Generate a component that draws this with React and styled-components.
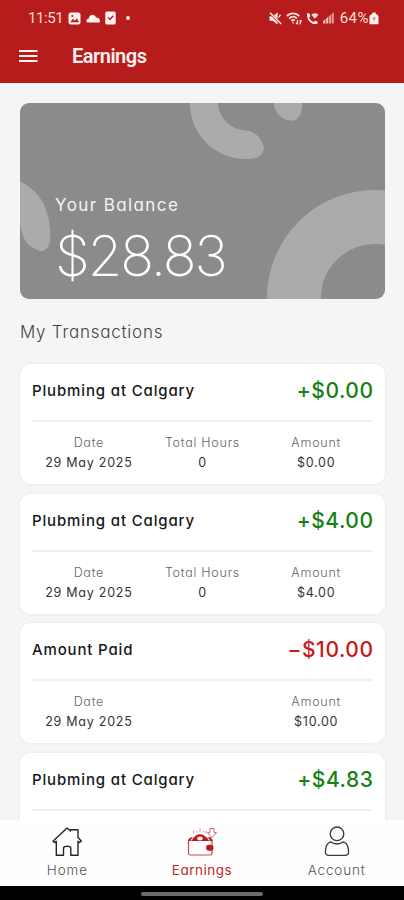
import React from "react";
import styled, { createGlobalStyle } from "styled-components";

const GlobalStyle = createGlobalStyle`
    * {
        box-sizing: border-box;
    }
    body {
        margin: 0;
        background-color: #f5f5f5;
        font-family: Inter, "Open Sans", sans-serif;
        font-feature-settings: "cv11";
    }
`;

export const Screen = styled.div`
    width: 404px;
    height: 900px;
    display: flex;
    flex-direction: column;
    overflow: hidden;
`;


//================================ Header =================================

export const Header = styled.header`
    height: 83px;
    flex-shrink: 0;
    background-color: #b71c1c;
    color: #fff1ee;
    font-family: Roboto, sans-serif;
`;

export const StatusBar = styled.div`
    height: 36px;
    padding: 0 25px 0 28px;
    display: flex;
    align-items: center;
    justify-content: space-between;
    font-size: 15px;
    color: #fbdcd8;
`;

export const StatusGroup = styled.div`
    display: flex;
    align-items: center;
    gap: ${({ $gap }) => $gap}px;
`;

export const StatusText = styled.span`
    letter-spacing: ${({ $spacing }) => $spacing}px;
`;

export const DotWrapper = styled.div`
    display: flex;
    margin-left: 5px;
`;

export const TitleBar = styled.div`
    height: 40px;
    padding-left: 19px;
    display: flex;
    align-items: center;
    gap: 34px;
`;

export const Title = styled.h1`
    margin: 0;
    font-size: 20px;
    font-weight: 600;
    line-height: 24px;
    letter-spacing: -0.5px;
`;


//================================ Balance =================================

export const Content = styled.main`
    flex: 1;
    min-height: 0;
    padding: 20px 19px 0 20px;
    overflow: hidden;
`;

export const BalanceCard = styled.section`
    position: relative;
    height: 196px;
    padding: 91px 35px 0;
    border-radius: 9px;
    background-color: #8b8b8b;
    color: white;
    overflow: hidden;
`;

export const BalancePattern = styled.svg`
    position: absolute;
    top: 0;
    left: 0;
`;

export const BalanceLabel = styled.div`
    position: relative;
    font-size: 17px;
    line-height: 23px;
    letter-spacing: 1.4px;
    color: #f4f4f4;
`;

export const BalanceValue = styled.div`
    position: relative;
    margin-top: 10px;
    font-size: 56px;
    font-weight: 250;
    line-height: 58px;
    letter-spacing: -2.1px;
`;


//================================ Transactions =================================

export const SectionTitle = styled.h2`
    margin: 20px 0 19px;
    font-size: 17px;
    font-weight: 300;
    line-height: 26px;
    letter-spacing: 0.75px;
    color: #444;
`;

export const TransactionList = styled.div`
    display: flex;
    flex-direction: column;
    gap: 9.7px;
`;

export const TransactionCard = styled.article`
    height: 120px;
    flex-shrink: 0;
    padding: 0 12px;
    border-radius: 11px;
    background-color: white;
    box-shadow: 0 0 2px 1px #ececec;
`;

export const TransactionHeader = styled.div`
    height: 58px;
    padding-bottom: 3px;
    display: flex;
    align-items: center;
    justify-content: space-between;
    border-bottom: 2px solid #f0f0f0;
`;

export const TransactionName = styled.div`
    font-size: 15px;
    font-weight: 550;
    letter-spacing: 0.85px;
    color: #181818;
`;

export const TransactionTotal = styled.div`
    margin-right: -0.5px;
    font-size: 21px;
    font-weight: 500;
    letter-spacing: 0.55px;
    color: ${({ $negative }) => ($negative ? "#c91818" : "#168016")};
`;

export const Details = styled.div`
    padding-top: 11px;
    display: grid;
    grid-template-columns: 1fr 1fr 1fr;
`;

export const Detail = styled.div`
    text-align: center;
    line-height: 20px;
`;

export const DetailLabel = styled.div`
    font-size: 12.5px;
    font-weight: 300;
    letter-spacing: 0.75px;
    color: #666;
`;

export const DetailValue = styled.div`
    font-size: 12.5px;
    letter-spacing: 0.75px;
    color: #333;
`;


//================================ BottomMenu =================================

export const BottomMenu = styled.nav`
    height: 66px;
    flex-shrink: 0;
    display: grid;
    grid-template-columns: 1fr 1fr 1fr;
    background-color: #fefefe;
`;

export const MenuItem = styled.div`
    padding-top: 5px;
    display: flex;
    flex-direction: column;
    align-items: center;
    gap: 4px;
    font-size: 13.5px;
    line-height: 18px;
    font-weight: ${({ $active }) => ($active ? 400 : 300)};
    letter-spacing: ${({ $active }) => ($active ? 0.5 : 0.85)}px;
    color: ${({ $active }) => ($active ? "#b92c2c" : "#555")};
`;

export const GestureBar = styled.div`
    height: 14px;
    flex-shrink: 0;
    display: flex;
    justify-content: center;
    align-items: center;
    padding-top: 1px;
    background-color: black;
`;

export const GestureHandle = styled.div`
    width: 122px;
    height: 4px;
    border-radius: 2px;
    background-color: #6c6c6c;
`;


//================================ Icons =================================

const PictureIcon = () => (
  <svg width="13" height="13" viewBox="0 0 13 13">
    <rect x="0.5" y="0.5" width="12" height="12" rx="2.5" fill="#fff1ee" />
    <path d="M2.2 10.2 L5 6.8 L7 8.8 L9 6.2 L11 10.2Z" fill="#b71c1c" />
    <circle cx="4.3" cy="4" r="1.1" fill="#b71c1c" />
  </svg>
);

const CloudIcon = () => (
  <svg width="14" height="9" viewBox="0 0 14 9">
    <path d="M2.3 8.6C-.3 8.3-.3 5 2.6 4.8C3.3.2 8.4-.7 10 3.4C13 3.2 14.4 5 13.8 8.6Z" fill="#fff1ee" />
  </svg>
);

const TaskIcon = () => (
  <svg width="11" height="14" viewBox="0 0 11 14">
    <rect x="0.3" y="0.5" width="10.4" height="13" rx="1.6" fill="#fff1ee" />
    <path d="M3 6.4L5 8.5L8.3 4.7" fill="none" stroke="#b71c1c" strokeWidth="1.3" />
  </svg>
);

const DotIcon = () => (
  <svg width="4" height="4" viewBox="0 0 4 4">
    <circle cx="2" cy="2" r="1.9" fill="#fff1ee" />
  </svg>
);

const MuteIcon = () => (
  <svg width="13" height="13" viewBox="0 0 13 13">
    <path d="M.5 4.3H3.6L8.6.6V12.4L3.6 8.8H.5Z" fill="#fff1ee" />
    <path d="M0 0L12.5 12.5" stroke="#b71c1c" strokeWidth="2.6" />
    <path d="M1 .8L12.2 12" stroke="#fff1ee" strokeWidth="1.5" />
    <path d="M9.8 5.5L11.4 2.6" stroke="#fff1ee" strokeWidth="1.2" />
  </svg>
);

const WifiIcon = () => (
  <svg width="16" height="13" viewBox="0 0 16 13" fill="none" stroke="#fbdcd8">
    <path d="M.8 4.2C4 .4 10 .4 13.2 4.2M3.1 6.6C5.5 4 8.7 4 10.9 6.5M5.2 8.7C6.4 7.5 7.8 7.5 8.8 8.7" strokeWidth="1.8" />
    <path d="M7 11.5V9.5M11.5 8V12.2M10 10.8L11.5 12.4M14.3 12.4V8M14.3 8L15.6 9.5" strokeWidth="1.3" />
  </svg>
);

const CallIcon = () => (
  <svg width="13" height="13" viewBox="0 0 13 13">
    <path d="M1.2 1.2L3.8 1.8L4.2 4.4L3 5.6C4 8 5.4 9.2 7.6 9.9L9 8.7L11.6 9.4L11.4 11.8C5.7 13.3.1 8.1 1.2 1.2Z" fill="#fff1ee" />
    <path d="M5.3 2.8C7.5.7 10.3.7 12.5 2.8L8.9 6.7Z" fill="#fbdcd8" />
  </svg>
);

const SignalIcon = () => (
  <svg width="11" height="12" viewBox="0 0 11 12">
    <path d="M0 11.5V9L2.3 7.2V11.5ZM2.9 11.5V6.7L5.2 4.8V11.5Z" fill="#f3b8b3" />
    <path d="M5.8 11.5V4.2L8 2.4V11.5ZM8.6 11.5V2L10.8.2V11.5Z" fill="#e39a96" />
  </svg>
);

const BatteryIcon = () => (
  <svg width="10" height="13" viewBox="0 0 10 13">
    <path d="M3.3 2V.6H6.7V2C8.6 2.3 9.5 3.5 9.5 5V12.3H.5V5C.5 3.5 1.4 2.3 3.3 2Z" fill="#fff1ee" />
    <path d="M5.8 3.5L3.4 7H4.8L4.2 9.8L6.9 6.2H5.4Z" fill="#b98480" />
  </svg>
);

const MenuIcon = () => (
  <svg width="19" height="14" viewBox="0 0 19 14" stroke="#fff1ee" strokeWidth="2">
    <path d="M0 2H18.5M0 7H18.5M0 12H18.5" />
  </svg>
);

const HomeIcon = () => (
  <svg width="32" height="32" viewBox="0 0 32 32" fill="none" stroke="#252525" strokeWidth="1.4" strokeLinejoin="round">
    <path d="M2 16.2L16 3L19.5 6.1V4.8H27V12.5L30.3 16L28.5 17.5L27 16.2V30.3H19.8V23C19.8 20.6 12.5 20.6 12.5 23V30.3H5.3V16.2L3.8 17.6Z" />
  </svg>
);

const WalletIcon = () => (
  <svg width="32" height="32" viewBox="0 0 32 32" fill="none">
    <path d="M2.5 15V28.5C2.5 29.5 3 30 4 30H24.2C25.3 30 26 29.4 26 28.5V15" stroke="#bd4c4c" strokeWidth="1.2" />
    <path d="M2 16C2.5 13 4.5 12 7 12H22C24.8 12 26.5 13.2 26.5 16Z" fill="#b71c1c" />
    <path d="M6.5 16C8 7 20 7 21.5 16" fill="#b71c1c" />
    <path d="M5 15.5L7.5 11.8M21 11.8L23.5 15.5" stroke="#f7dcdc" strokeWidth="1.2" />
    <ellipse cx="14" cy="13.5" rx="2.8" ry="1.9" fill="#ffe7e7" />
    <rect x="20.2" y="19.8" width="7.2" height="6" rx="2.4" fill="#b71c1c" />
    <path d="M7.5 8.5V5.5M10.7 7.5V6M14 6.5V3.5M17.3 7.5V6M20 8.5V6" stroke="#d98b8b" strokeWidth="1" />
    <path d="M23.8 3.5H28V7.7H30.5L26 12.6L21.5 7.7H23.8Z" stroke="#c96c6c" strokeWidth="1" />
  </svg>
);

const AccountIcon = () => (
  <svg width="32" height="32" viewBox="0 0 32 32" fill="none" stroke="#3a3a3a" strokeWidth="1.3" strokeLinejoin="round">
    <circle cx="16" cy="8.8" r="6.8" />
    <path d="M9.5 16.8C6 18 4.4 21.5 4.4 27C4.4 29.2 5.7 30.4 8 30.4H24C26.3 30.4 27.6 29.2 27.6 27C27.6 21.5 26 18 22.5 16.8C18.5 19.5 13.5 19.5 9.5 16.8Z" />
  </svg>
);


//================================ App =================================

const transactions = [
  { name: "Plubming at Calgary", total: "+$0.00", date: "29 May 2025", hours: "0", amount: "$0.00" },
  { name: "Plubming at Calgary", total: "+$4.00", date: "29 May 2025", hours: "0", amount: "$4.00" },
  { name: "Amount Paid", total: "−$10.00", date: "29 May 2025", amount: "$10.00", negative: true },
  { name: "Plubming at Calgary", total: "+$4.83" },
];

const DetailItem = ({ label, value }) => (
  <Detail>
    {value && (
      <>
        <DetailLabel>{label}</DetailLabel>
        <DetailValue>{value}</DetailValue>
      </>
    )}
  </Detail>
);

const Transaction = ({ item }) => (
  <TransactionCard>
    <TransactionHeader>
      <TransactionName>{item.name}</TransactionName>
      <TransactionTotal $negative={item.negative}>{item.total}</TransactionTotal>
    </TransactionHeader>
    <Details>
      <DetailItem label="Date" value={item.date} />
      <DetailItem label="Total Hours" value={item.hours} />
      <DetailItem label="Amount" value={item.amount} />
    </Details>
  </TransactionCard>
);

export default function App() {
  return (
    <Screen>
      <GlobalStyle />
      <Header>
        <StatusBar>
          <StatusGroup $gap={5}>
            <StatusText $spacing={-0.4}>11:51</StatusText>
            <PictureIcon />
            <CloudIcon />
            <TaskIcon />
            <DotWrapper>
              <DotIcon />
            </DotWrapper>
          </StatusGroup>
          <StatusGroup $gap={4}>
            <MuteIcon />
            <WifiIcon />
            <CallIcon />
            <SignalIcon />
            <StatusGroup $gap={0}>
              <StatusText $spacing={0.5}>&#8202;64%</StatusText>
              <BatteryIcon />
            </StatusGroup>
          </StatusGroup>
        </StatusBar>
        <TitleBar>
          <MenuIcon />
          <Title>Earnings</Title>
        </TitleBar>
      </Header>

      <Content>
        <BalanceCard>
          <BalancePattern width="365" height="196" viewBox="0 0 365 196" fill="none">
            <path d="M169.7 -1C169.7 31 194 56 226 56C237 56.5 244 52 244 45C242 35 234 27.5 225 27.5C210 26 198 14 198 -1Z" fill="#ababab" />
            <path d="M253.8 -1C254 9 262 17.7 271 17.7C279 17.7 283 9 282 -1Z" fill="#ababab" />
            <path d="M0 78.6C17 86 30 103 30.3 132C31 142 27 148 21 148C8 145 1 136 0 118Z" fill="#ababab" />
            <circle cx="355" cy="195" r="81" stroke="#ababab" strokeWidth="54" />
          </BalancePattern>
          <BalanceLabel>Your Balance</BalanceLabel>
          <BalanceValue>$28.83</BalanceValue>
        </BalanceCard>

        <SectionTitle>My Transactions</SectionTitle>
        <TransactionList>
          {transactions.map((item, index) => (
            <Transaction key={index} item={item} />
          ))}
        </TransactionList>
      </Content>

      <BottomMenu>
        <MenuItem>
          <HomeIcon />
          Home
        </MenuItem>
        <MenuItem $active>
          <WalletIcon />
          Earnings
        </MenuItem>
        <MenuItem>
          <AccountIcon />
          Account
        </MenuItem>
      </BottomMenu>
      <GestureBar>
        <GestureHandle />
      </GestureBar>
    </Screen>
  );
}
